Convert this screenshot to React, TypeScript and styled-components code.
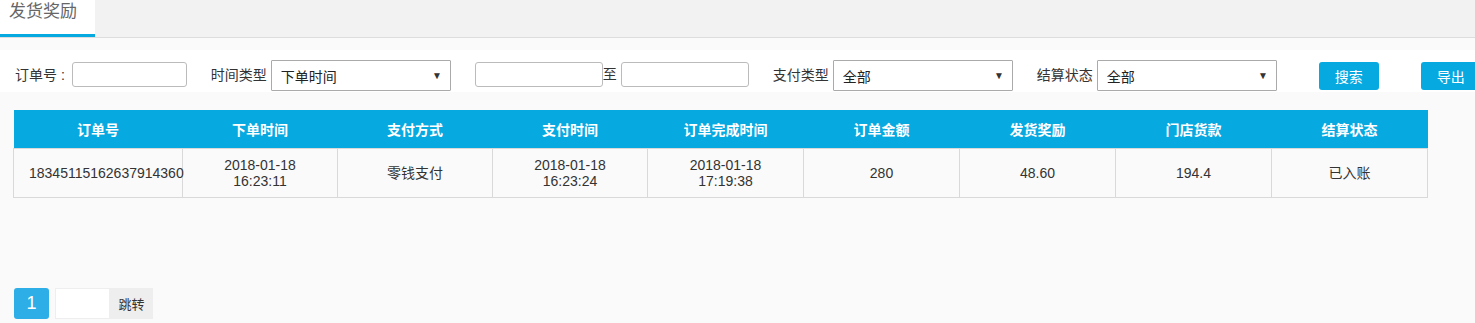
import React from 'react';
import styled, { createGlobalStyle } from 'styled-components';

const GlobalStyle = createGlobalStyle`
  html, body {
    margin: 0;
    padding: 0;
    background: #fafafa;
    font-family: "Liberation Sans", Arial, "Noto Sans CJK SC", sans-serif;
    color: #333;
  }
`;

const Page = styled.div`
  width: 1475px;
  height: 323px;
  overflow: hidden;
  background: #fafafa;
`;

const TabBar = styled.div`
  display: flex;
  height: 37px;
  background: #f2f2f2;
  border-bottom: 1px solid #ddd;
`;

const Tab = styled.div<{ active?: boolean }>`
  width: 95px;
  box-sizing: border-box;
  padding: 0 0 0 9px;
  font-size: 17px;
  color: #666;
  background: ${(p) => (p.active ? '#fff' : 'transparent')};
  border-bottom: 3px solid ${(p) => (p.active ? '#07a9e1' : 'transparent')};
  line-height: 24px;
`;

const FilterBar = styled.div`
  display: flex;
  align-items: flex-start;
  height: 42px;
  box-sizing: border-box;
  margin-top: 12px;
  padding: 10px 0 0 15px;
  background: #fff;
  white-space: nowrap;
  overflow: hidden;

  & > * {
    flex-shrink: 0;
  }
`;

const Label = styled.span<{ gap?: number }>`
  margin: 7px 4px 0 ${(p) => p.gap ?? 0}px;
  font-size: 14px;
  line-height: 17px;
  color: #333;
`;

const TextInput = styled.div<{ w: number; gap?: number }>`
  width: ${(p) => p.w}px;
  height: 25px;
  box-sizing: border-box;
  margin: 2px 0 0 ${(p) => p.gap ?? 0}px;
  border: 1px solid #bbb;
  border-radius: 3px;
  background: #fff;
`;

const Select = styled.div`
  display: flex;
  align-items: center;
  justify-content: space-between;
  width: 180px;
  height: 31px;
  box-sizing: border-box;
  padding: 0 8px 0 9px;
  border: 1px solid #aaa;
  border-radius: 1px;
  background: #fff;
  font-size: 14px;
  color: #222;
`;

const Arrow = styled.span`
  font-size: 10px;
  color: #333;
`;

const To = styled.span`
  width: 18px;
  margin-top: 6px;
  font-size: 14px;
  line-height: 17px;
  color: #333;
`;

const Button = styled.div<{ gap: number }>`
  display: flex;
  align-items: center;
  justify-content: center;
  width: 60px;
  height: 28px;
  margin: 2px 0 0 ${(p) => p.gap}px;
  border-radius: 3px;
  background: #07a9e1;
  color: #fff;
  font-size: 14px;
`;

const Table = styled.table`
  margin: 18px 0 0 13px;
  width: 1414px;
  border-collapse: collapse;
  table-layout: fixed;
`;

const Th = styled.th`
  height: 38px;
  padding: 0 15px;
  background: #07a9e1;
  color: #fff;
  font-weight: bold;
  font-size: 14px;
  text-align: center;
`;

const Td = styled.td`
  height: 48px;
  padding: 0 15px;
  border: 1px solid #d9d9d9;
  text-align: center;
  color: #333;
  font-size: 14px;
  line-height: 16px;
  background: #fafafa;
  white-space: nowrap;
`;

const Pager = styled.div`
  display: flex;
  align-items: center;
  margin: 90px 0 0 14px;
`;

const PageNum = styled.div`
  display: flex;
  align-items: center;
  justify-content: center;
  width: 35px;
  height: 31px;
  border-radius: 3px;
  background: #2daee6;
  color: #fff;
  font-size: 18px;
`;

const JumpInput = styled.div`
  width: 55px;
  height: 31px;
  box-sizing: border-box;
  margin-left: 6px;
  border: 1px solid #eee;
  background: #fff;
`;

const JumpButton = styled.div`
  display: flex;
  align-items: center;
  justify-content: center;
  width: 43px;
  height: 31px;
  background: #eee;
  color: #333;
  font-size: 13px;
`;

const columns = [
  { title: '订单号', width: 169 },
  { title: '下单时间', width: 155 },
  { title: '支付方式', width: 155 },
  { title: '支付时间', width: 155 },
  { title: '订单完成时间', width: 156 },
  { title: '订单金额', width: 156 },
  { title: '发货奖励', width: 156 },
  { title: '门店货款', width: 156 },
  { title: '结算状态', width: 156 },
];

const rows = [
  [
    '18345115162637914360',
    '2018-01-18\n16:23:11',
    '零钱支付',
    '2018-01-18\n16:23:24',
    '2018-01-18\n17:19:38',
    '280',
    '48.60',
    '194.4',
    '已入账',
  ],
];

const Cell: React.FC<{ value: string }> = ({ value }) => {
  const lines = value.split('\n');
  return (
    <Td>
      {lines.map((line, i) => (
        <React.Fragment key={i}>
          {i > 0 && <br />}
          {line}
        </React.Fragment>
      ))}
    </Td>
  );
};

export default function App() {
  return (
    <Page>
      <GlobalStyle />
      <TabBar>
        <Tab active>发货奖励</Tab>
      </TabBar>
      <FilterBar>
        <Label>订单号 :</Label>
        <TextInput w={115} gap={3} />
        <Label gap={24}>时间类型</Label>
        <Select>
          下单时间<Arrow>▼</Arrow>
        </Select>
        <TextInput w={128} gap={24} />
        <To>至</To>
        <TextInput w={128} />
        <Label gap={24}>支付类型</Label>
        <Select>
          全部<Arrow>▼</Arrow>
        </Select>
        <Label gap={24}>结算状态</Label>
        <Select>
          全部<Arrow>▼</Arrow>
        </Select>
        <Button gap={42}>搜索</Button>
        <Button gap={42}>导出</Button>
      </FilterBar>
      <Table>
        <colgroup>
          {columns.map((c) => (
            <col key={c.title} style={{ width: c.width }} />
          ))}
        </colgroup>
        <thead>
          <tr>
            {columns.map((c) => (
              <Th key={c.title}>{c.title}</Th>
            ))}
          </tr>
        </thead>
        <tbody>
          {rows.map((row, r) => (
            <tr key={r}>
              {row.map((v, i) => (
                <Cell key={i} value={v} />
              ))}
            </tr>
          ))}
        </tbody>
      </Table>
      <Pager>
        <PageNum>1</PageNum>
        <JumpInput />
        <JumpButton>跳转</JumpButton>
      </Pager>
    </Page>
  );
}
